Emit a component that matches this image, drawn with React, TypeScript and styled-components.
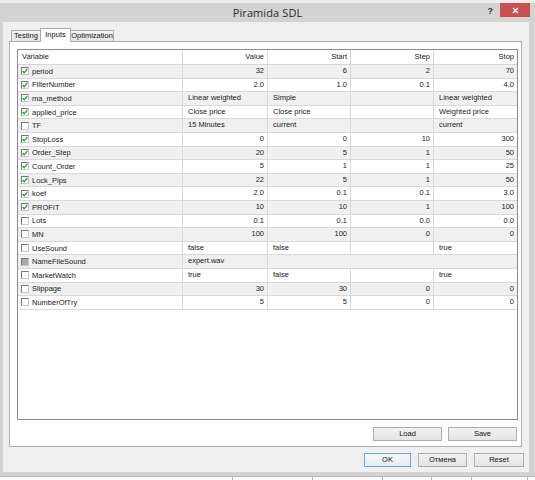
import React from "react";
import styled, { createGlobalStyle } from "styled-components";

const GlobalStyle = createGlobalStyle`
  html, body {
    margin: 0;
    padding: 0;
    background: #f7f7f7;
  }
  body {
    font-family: "Liberation Sans", Arial, sans-serif;
  }
`;

type Check = "on" | "off" | "disabled";

interface Param {
  name: string;
  check: Check;
  kind: "num" | "text" | "file";
  value: string;
  start?: string;
  step?: string;
  stop?: string;
}

const params: Param[] = [
  { name: "period", check: "on", kind: "num", value: "32", start: "6", step: "2", stop: "70" },
  { name: "FilterNumber", check: "on", kind: "num", value: "2.0", start: "1.0", step: "0.1", stop: "4.0" },
  { name: "ma_method", check: "on", kind: "text", value: "Linear weighted", start: "Simple", step: "", stop: "Linear weighted" },
  { name: "applied_price", check: "on", kind: "text", value: "Close price", start: "Close price", step: "", stop: "Weighted price" },
  { name: "TF", check: "off", kind: "text", value: "15 Minutes", start: "current", step: "", stop: "current" },
  { name: "StopLoss", check: "on", kind: "num", value: "0", start: "0", step: "10", stop: "300" },
  { name: "Order_Step", check: "on", kind: "num", value: "20", start: "5", step: "1", stop: "50" },
  { name: "Count_Order", check: "on", kind: "num", value: "5", start: "1", step: "1", stop: "25" },
  { name: "Lock_Pips", check: "on", kind: "num", value: "22", start: "5", step: "1", stop: "50" },
  { name: "koef", check: "on", kind: "num", value: "2.0", start: "0.1", step: "0.1", stop: "3.0" },
  { name: "PROFIT", check: "on", kind: "num", value: "10", start: "10", step: "1", stop: "100" },
  { name: "Lots", check: "off", kind: "num", value: "0.1", start: "0.1", step: "0.0", stop: "0.0" },
  { name: "MN", check: "off", kind: "num", value: "100", start: "100", step: "0", stop: "0" },
  { name: "UseSound", check: "off", kind: "text", value: "false", start: "false", step: "", stop: "true" },
  { name: "NameFileSound", check: "disabled", kind: "file", value: "expert.wav" },
  { name: "MarketWatch", check: "off", kind: "text", value: "true", start: "false", step: "", stop: "true" },
  { name: "Slippage", check: "off", kind: "num", value: "30", start: "30", step: "0", stop: "0" },
  { name: "NumberOfTry", check: "off", kind: "num", value: "5", start: "5", step: "0", stop: "0" },
];

const Screen = styled.div`
  width: 535px;
  height: 480px;
  overflow: hidden;
  display: flex;
  flex-direction: column;
  background: #f7f7f7;
`;

const BehindTop = styled.div`
  flex: none;
  height: 3px;
  background: #eeeeee;
`;

const Window = styled.div`
  flex: none;
  height: 473px;
  display: flex;
  flex-direction: column;
  background: #d3d3d3;
`;

const TitleBar = styled.div`
  flex: none;
  height: 19px;
  display: grid;
  grid-template-columns: 1fr auto 1fr;
  align-items: start;
`;

const Title = styled.div`
  grid-column: 2;
  font-family: "Open Sans", "Liberation Sans", sans-serif;
  font-size: 11px;
  line-height: 19px;
  color: #2b2b2b;
  letter-spacing: 0.1px;
`;

const TitleControls = styled.div`
  grid-column: 3;
  justify-self: end;
  display: flex;
  align-items: flex-start;
  gap: 7px;
  padding-right: 5px;
`;

const HelpMark = styled.span`
  font-family: "Liberation Sans", Arial, sans-serif;
  font-weight: bold;
  font-size: 9px;
  line-height: 16px;
  color: #333333;
`;

const CloseButton = styled.div`
  width: 30px;
  height: 14px;
  background: #c75150;
  display: flex;
  align-items: center;
  justify-content: center;
`;

const Frame = styled.div`
  flex: 1;
  display: flex;
  padding: 0 6px 4px 3px;
  min-height: 0;
`;

const Client = styled.div`
  flex: 1;
  display: flex;
  flex-direction: column;
  background: #f0f0f0;
  padding: 6px 6px 5px 6px;
  min-width: 0;
`;

const TabRow = styled.div`
  flex: none;
  height: 14px;
  margin-bottom: -1px;
  display: flex;
  align-items: flex-end;
  padding-left: 2px;
  position: relative;
  z-index: 1;
`;

const Tab = styled.div<{ $active?: boolean; $w: number }>`
  width: ${(p) => p.$w}px;
  height: ${(p) => (p.$active ? 14 : 12)}px;
  box-sizing: border-box;
  border: 1px solid #acacac;
  border-bottom: ${(p) => (p.$active ? "none" : "1px solid #acacac")};
  margin-left: ${(p) => (p.$active ? -1 : 0)}px;
  margin-right: ${(p) => (p.$active ? -1 : 0)}px;
  background: ${(p) =>
    p.$active ? "#ffffff" : "linear-gradient(#f3f3f3, #e6e6e6)"};
  font-size: 7.5px;
  line-height: ${(p) => (p.$active ? 11 : 10)}px;
  color: #111111;
  text-align: center;
  position: relative;
  z-index: ${(p) => (p.$active ? 2 : 1)};
`;

const Panel = styled.div`
  flex: 1;
  min-height: 0;
  margin-right: 1px;
  border: 1px solid #acacac;
  background: #ffffff;
  display: flex;
  flex-direction: column;
  padding: 7px 3px 5px 7px;
`;

const Table = styled.div`
  flex: 1;
  min-height: 0;
  border: 1px solid #8c8c8c;
  background: #ffffff;
  display: flex;
  flex-direction: column;
`;

const cols = "165px 85px 83px 83px 1fr";

const HeaderRow = styled.div`
  flex: none;
  height: 15px;
  display: grid;
  grid-template-columns: ${cols};
  box-sizing: border-box;
  border-bottom: 1px solid #d6d6d6;
`;

const Row = styled.div<{ $shaded: boolean }>`
  flex: none;
  height: 13.6px;
  display: grid;
  grid-template-columns: ${cols};
  box-sizing: border-box;
  border-bottom: 1px solid #d9d9d9;
  background: ${(p) => (p.$shaded ? "#f0f0f0" : "#ffffff")};
`;

const Cell = styled.div<{ $align?: "left" | "right"; $span?: number; $last?: boolean }>`
  grid-column: span ${(p) => p.$span ?? 1};
  box-sizing: border-box;
  border-right: ${(p) => (p.$last ? "none" : "1px solid #d9d9d9")};
  padding: ${(p) => (p.$align === "right" ? "0 3px 0 0" : "0 0 0 5px")};
  text-align: ${(p) => p.$align ?? "left"};
  font-size: 7.5px;
  line-height: 12.6px;
  color: #1a1a1a;
  white-space: nowrap;
  overflow: hidden;
`;

const HeadCell = styled(Cell)`
  line-height: 14px;
  color: #222222;
`;

const NameCell = styled.div`
  box-sizing: border-box;
  border-right: 1px solid #d9d9d9;
  display: flex;
  align-items: center;
  gap: 3px;
  padding-left: 3px;
  font-size: 7.5px;
  color: #1a1a1a;
  white-space: nowrap;
  overflow: hidden;
`;

const Box = styled.span<{ $state: Check }>`
  flex: none;
  width: 8px;
  height: 8px;
  box-sizing: border-box;
  border: 1px solid;
  border-color: #7a7a7a #c9c9c9 #c9c9c9 #7a7a7a;
  background: ${(p) => (p.$state === "disabled" ? "#a9a9a9" : "#ffffff")};
  display: flex;
  align-items: center;
  justify-content: center;
`;

const Spacer = styled.div`
  flex: 1;
`;

const ButtonRow = styled.div<{ $gap: number; $top: number; $right: number }>`
  flex: none;
  display: flex;
  justify-content: flex-end;
  gap: ${(p) => p.$gap}px;
  margin-top: ${(p) => p.$top}px;
  margin-right: ${(p) => p.$right}px;
`;

const Button = styled.div<{ $w: number; $default?: boolean }>`
  width: ${(p) => p.$w}px;
  height: 14px;
  box-sizing: border-box;
  border: 1px solid ${(p) => (p.$default ? "#6fa2d6" : "#adadad")};
  background: ${(p) =>
    p.$default
      ? "linear-gradient(#f4f7fb, #e8edf3)"
      : "linear-gradient(#f2f2f2, #e4e4e4)"};
  font-size: 7.5px;
  line-height: 12px;
  color: #111111;
  text-align: center;
`;

const BehindBottom = styled.div`
  flex: none;
  height: 4px;
  display: flex;
  background: #fbfbfb;
  border-top: 1px solid #b9b9b9;
`;

const Column = styled.div<{ $w: number }>`
  flex: none;
  width: ${(p) => p.$w}px;
  border-left: 1px solid #b0b0b0;
  &:first-child {
    border-left: none;
  }
`;

function CheckBox({ state }: { state: Check }) {
  return (
    <Box $state={state}>
      {state === "on" && (
        <svg width="6" height="6" viewBox="0 0 6 6">
          <polyline
            points="0.6,3 2.2,4.8 5.4,0.8"
            fill="none"
            stroke="#2a9a2a"
            strokeWidth="1.3"
          />
        </svg>
      )}
    </Box>
  );
}

function ParamRow({ p, index }: { p: Param; index: number }) {
  const shaded = index % 2 === 0;
  const align = p.kind === "num" ? "right" : "left";
  return (
    <Row $shaded={shaded}>
      <NameCell>
        <CheckBox state={p.check} />
        <span>{p.name}</span>
      </NameCell>
      <Cell $align={align}>{p.value}</Cell>
      {p.kind === "file" ? (
        <Cell $span={3} $last />
      ) : (
        <>
          <Cell $align={align}>{p.start}</Cell>
          <Cell $align="right">{p.step}</Cell>
          <Cell $align={align} $last>
            {p.stop}
          </Cell>
        </>
      )}
    </Row>
  );
}

export default function App() {
  return (
    <>
      <GlobalStyle />
      <Screen>
        <BehindTop />
        <Window>
          <TitleBar>
            <Title>Piramida SDL</Title>
            <TitleControls>
              <HelpMark>?</HelpMark>
              <CloseButton>
                <svg width="7" height="7" viewBox="0 0 7 7">
                  <path d="M1 1 L6 6 M6 1 L1 6" stroke="#ffffff" strokeWidth="1.4" />
                </svg>
              </CloseButton>
            </TitleControls>
          </TitleBar>
          <Frame>
            <Client>
              <TabRow>
                <Tab $w={30}>Testing</Tab>
                <Tab $w={31} $active>
                  Inputs
                </Tab>
                <Tab $w={44}>Optimization</Tab>
              </TabRow>
              <Panel>
                <Table>
                  <HeaderRow>
                    <HeadCell style={{ paddingLeft: 4 }}>Variable</HeadCell>
                    <HeadCell $align="right">Value</HeadCell>
                    <HeadCell $align="right">Start</HeadCell>
                    <HeadCell $align="right">Step</HeadCell>
                    <HeadCell $align="right" $last>
                      Stop
                    </HeadCell>
                  </HeaderRow>
                  {params.map((p, i) => (
                    <ParamRow key={p.name} p={p} index={i} />
                  ))}
                  <Spacer />
                </Table>
                <ButtonRow $gap={6} $top={7} $right={1}>
                  <Button $w={69}>Load</Button>
                  <Button $w={69}>Save</Button>
                </ButtonRow>
              </Panel>
              <ButtonRow $gap={7} $top={6} $right={-1}>
                <Button $w={47} $default>
                  OK
                </Button>
                <Button $w={49}>Отмена</Button>
                <Button $w={50}>Reset</Button>
              </ButtonRow>
            </Client>
          </Frame>
        </Window>
        <BehindBottom>
          <Column $w={232} />
          <Column $w={79} />
          <Column $w={69} />
          <Column $w={48} />
          <Column $w={39} />
          <Column $w={55} />
          <Column $w={13} />
        </BehindBottom>
      </Screen>
    </>
  );
}
